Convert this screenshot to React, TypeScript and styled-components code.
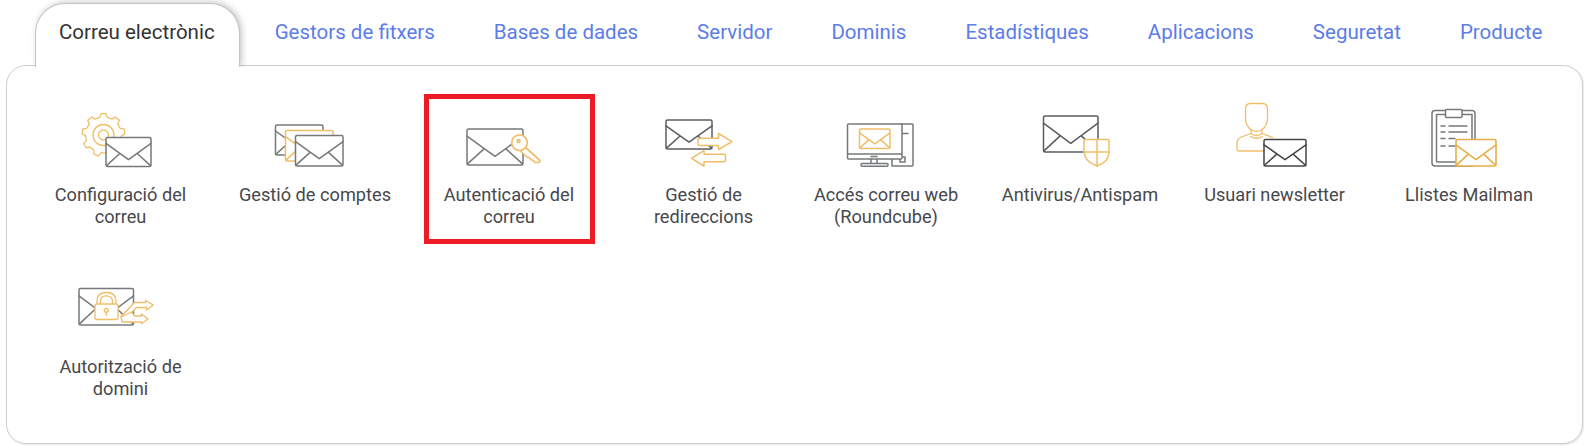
import React from "react";
import styled, { createGlobalStyle } from "styled-components";

const GOLD = "#EFBE69";
const GREY = "#76797B";
const DARK = "#5A5D60";

const Global = createGlobalStyle`
  html, body { margin: 0; padding: 0; background: #fff; }
  body { font-family: Roboto, "Liberation Sans", sans-serif; }
`;

const Page = styled.div`
  width: 1584px;
  height: 446px;
  box-sizing: border-box;
  padding: 3px 1px 3px 6px;
  overflow: hidden;
`;

const TabBar = styled.nav`
  display: flex;
  gap: 9px;
  height: 63px;
  margin-left: 29px;
  margin-bottom: -1px;
  position: relative;
  z-index: 2;
`;

const Tab = styled.a<{ $active?: boolean }>`
  display: flex;
  align-items: center;
  box-sizing: border-box;
  height: 64px;
  padding: 0 ${(p) => (p.$active ? "24px 7px 23px" : "24px 7px")};
  margin-right: ${(p) => (p.$active ? 1 : 0)}px;
  font-size: 20.5px;
  white-space: nowrap;
  color: ${(p) => (p.$active ? "#333" : "#5C7CEA")};
  background: ${(p) => (p.$active ? "#fff" : "transparent")};
  border: ${(p) => (p.$active ? "1px solid #c4c4c4" : "1px solid transparent")};
  border-bottom: none;
  border-radius: 30px 30px 0 0;
  box-shadow: ${(p) => (p.$active ? "2px -1px 6px rgba(0,0,0,.22)" : "none")};
  clip-path: inset(-12px -12px 0 -12px);
`;

const Panel = styled.section`
  box-sizing: border-box;
  height: 379px;
  padding: 28px 0 0 16px;
  background: #fff;
  border: 1px solid #cfcfcf;
  border-radius: 20px;
  box-shadow: 1px 1px 2px rgba(0, 0, 0, 0.1);
`;

const Grid = styled.div`
  display: grid;
  grid-template-columns: 195px 194px 194px 195px 170px 218px 171px 218px;
  grid-auto-rows: 150px;
  row-gap: 22px;
`;

const Item = styled.a<{ $marked?: boolean }>`
  justify-self: center;
  box-sizing: border-box;
  width: 171px;
  height: 150px;
  padding-top: 1px;
  display: flex;
  flex-direction: column;
  align-items: center;
  border: 5px solid ${(p) => (p.$marked ? "#ED1C24" : "transparent")};
`;

const IconSvg = styled.svg`
  display: block;
  width: 90px;
  height: 72px;
  flex: none;
  fill: #fff;
  stroke-width: 1.3;
  stroke-linejoin: round;
  stroke-linecap: round;
`;

const Label = styled.span`
  margin-top: 12px;
  max-width: 161px;
  font-size: 18.2px;
  line-height: 22px;
  text-align: center;
  color: #47484c;
`;

const Envelope = ({ x, y, w, h, c = GREY, sw = 1.5 }: { x: number; y: number; w: number; h: number; c?: string; sw?: number }) => (
  <g stroke={c} strokeWidth={sw}>
    <rect x={x} y={y} width={w} height={h} rx={1.5} />
    <path
      fill="none"
      d={`M${x} ${y + 0.2 * h}L${x + 0.5 * w} ${y + 0.76 * h}L${x + w} ${y + 0.2 * h}M${x + 0.5} ${y + 0.97 * h}L${x + 0.3 * w} ${y + 0.56 * h}M${x + w - 0.5} ${y + 0.97 * h}L${x + 0.7 * w} ${y + 0.56 * h}`}
    />
  </g>
);

const gearPath = (cx: number, cy: number, r1: number, r2: number, n: number) => {
  const pts: string[] = [];
  const st = (Math.PI * 2) / n;
  for (let i = 0; i < n; i++) {
    const a = i * st - Math.PI / 2;
    const seq: [number, number][] = [
      [a - st * 0.3, r1],
      [a - st * 0.17, r2],
      [a + st * 0.17, r2],
      [a + st * 0.3, r1],
    ];
    seq.forEach(([t, r]) => pts.push(`${(cx + Math.cos(t) * r).toFixed(1)} ${(cy + Math.sin(t) * r).toFixed(1)}`));
  }
  return "M" + pts.join("L") + "Z";
};

const ConfigIcon = () => (
  <IconSvg viewBox="75.5 100 90 72">
    <g stroke={GOLD} fill="none">
      <path d={gearPath(103, 135, 18, 21.5, 9)} />
      <circle cx={103} cy={135} r={10.5} />
      <circle cx={103} cy={135} r={5} />
    </g>
    <Envelope x={105.5} y={137.5} w={45} h={29} />
  </IconSvg>
);

const AccountsIcon = () => (
  <IconSvg viewBox="270 100 90 72">
    <Envelope x={275.5} y={125} w={47.5} h={30} />
    <Envelope x={285.5} y={130.5} w={47.5} h={30.5} c={GOLD} />
    <Envelope x={295.5} y={135.5} w={47.5} h={30.5} />
  </IconSvg>
);

const AuthIcon = () => (
  <IconSvg viewBox="464 100 90 72">
    <Envelope x={467} y={129} w={56} h={36} />
    <g stroke={GOLD} strokeWidth={1.7}>
      <path d="M524 146L540 160.5L539 162.5L535 162.5L533 160L531 160L529.5 157.5L527.5 157.5L520.5 151Z" />
      <circle cx={519.5} cy={142.7} r={7.8} />
      <circle cx={518.5} cy={141} r={1.4} fill="none" />
    </g>
  </IconSvg>
);

const RedirectIcon = () => (
  <IconSvg viewBox="658.5 100 90 72">
    <Envelope x={665.5} y={120} w={46} h={29} c={DARK} />
    <g stroke={GOLD} strokeWidth={1.5}>
      <path d="M699 138.3H718V133.5L731.5 141.7L718 149.5V145.5H699Q697.5 145.5 697.5 144V139.8Q697.5 138.3 699 138.3Z" />
      <path d="M723.5 154.3H703.5V150.7L691 158.3L703.5 166V161.7H723.5Q725 161.7 725 160.2V155.8Q725 154.3 723.5 154.3Z" />
    </g>
  </IconSvg>
);

const WebmailIcon = () => (
  <IconSvg viewBox="841 100 90 72">
    <g stroke={GREY} strokeWidth={1.5}>
      <path d="M892 159V166H912Q913 166 913 165V125Q913 124 912 124H900" fill="none" />
      <path d="M902 133.5H908" fill="none" />
      <rect x={900} y={157} width={5} height={5} fill="none" />
      <rect x={847.5} y={124} width={54.5} height={35} rx={1} />
      <path d="M848 154H902M871 156.5H877M871 159V163.5M877 159V163.5" fill="none" />
      <rect x={861} y={163.5} width={27} height={2.8} rx={1} />
    </g>
    <Envelope x={859.5} y={129} w={30.5} h={19.5} c={GOLD} />
  </IconSvg>
);

const AntivirusIcon = () => (
  <IconSvg viewBox="1035 100 90 72">
    <Envelope x={1043.5} y={116} w={54.5} h={36} c={DARK} />
    <g stroke={GOLD} strokeWidth={1.5}>
      <path d="M1085.5 139.5H1107.5Q1109 139.5 1109 141V152Q1109 162 1097 166Q1085 162 1084 152V141Q1084 139.5 1085.5 139.5Z" />
      <path d="M1097 139.5V166M1084 152H1109" fill="none" />
    </g>
  </IconSvg>
);

const NewsletterIcon = () => (
  <IconSvg viewBox="1229.5 100 90 72">
    <g stroke={GOLD} fill="none">
      <path d="M1250 103.5H1262Q1267 103.5 1267 109V118Q1267 126 1261 130Q1256 132.5 1251 130Q1245 126 1245 118V109Q1245 103.5 1250 103.5Z" />
      <path d="M1250.5 130V133.5Q1256 137.5 1261.5 133.5V130M1250.5 133.5L1241 137Q1236.5 139 1236.5 143V149.5Q1236.5 151 1238 151H1265M1261.5 133.5L1272 137.5" />
      <path d="M1250 136.5Q1256 140 1262 136.5" />
    </g>
    <Envelope x={1263.5} y={139.5} w={42} h={26.5} c="#444" />
  </IconSvg>
);

const MailmanIcon = () => (
  <IconSvg viewBox="1424 100 90 72">
    <g stroke={GREY} strokeWidth={1.5} fill="none">
      <rect x={1432} y={110.5} width={43} height={55.5} rx={3} />
      <path d="M1437 162H1472V114.5H1462M1445 114.5H1436.5V161.5" />
      <rect x={1445.5} y={109.5} width={16.5} height={8} rx={1} fill="#fff" />
      <path d="M1441 126H1445M1449 126H1467M1441 132H1445M1449 132H1467M1441 138.5H1445M1449 138.5H1455M1441 146H1445M1449 146H1455" />
    </g>
    <Envelope x={1456} y={139.5} w={40} h={26.5} c="#E8AE49" sw={1.6} />
  </IconSvg>
);

const DomainIcon = () => (
  <IconSvg viewBox="75.5 273 90 72">
    <Envelope x={78.5} y={289.5} w={54.5} h={36.5} />
    <g stroke={GOLD}>
      <path fill="none" d="M96.5 305V302Q96.5 293.5 105.8 293.5Q115.5 293.5 115.5 302V305M100 305V302.5Q100 296.8 105.8 296.8Q112 296.8 112 302.5V305" />
      <rect x={94.5} y={305} width={23} height={15.5} rx={2} />
      <path fill="none" d="M105.8 313V316.5" />
      <circle cx={105.8} cy={311.3} r={2} fill="none" />
      <path d="M120.5 317.5L134 303.5H145V301.5L152.7 306L146 311V308.5H136L131 313.5L128 317.5Z" />
      <path d="M120.5 318L131 313L134 317H141V315L147.5 320L141 324.7V323H121.5Z" />
    </g>
  </IconSvg>
);

const tabs = ["Correu electrònic", "Gestors de fitxers", "Bases de dades", "Servidor", "Dominis", "Estadístiques", "Aplicacions", "Seguretat", "Producte"];

const items: { label: string; Icon: () => React.JSX.Element; marked?: boolean }[] = [
  { label: "Configuració del correu", Icon: ConfigIcon },
  { label: "Gestió de comptes", Icon: AccountsIcon },
  { label: "Autenticació del correu", Icon: AuthIcon, marked: true },
  { label: "Gestió de redireccions", Icon: RedirectIcon },
  { label: "Accés correu web (Roundcube)", Icon: WebmailIcon },
  { label: "Antivirus/Antispam", Icon: AntivirusIcon },
  { label: "Usuari newsletter", Icon: NewsletterIcon },
  { label: "Llistes Mailman", Icon: MailmanIcon },
  { label: "Autorització de domini", Icon: DomainIcon },
];

export default function App() {
  return (
    <Page>
      <Global />
      <TabBar>
        {tabs.map((t, i) => (
          <Tab key={t} $active={i === 0}>{t}</Tab>
        ))}
      </TabBar>
      <Panel>
        <Grid>
          {items.map(({ label, Icon, marked }) => (
            <Item key={label} $marked={marked}>
              <Icon />
              <Label>{label}</Label>
            </Item>
          ))}
        </Grid>
      </Panel>
    </Page>
  );
}
